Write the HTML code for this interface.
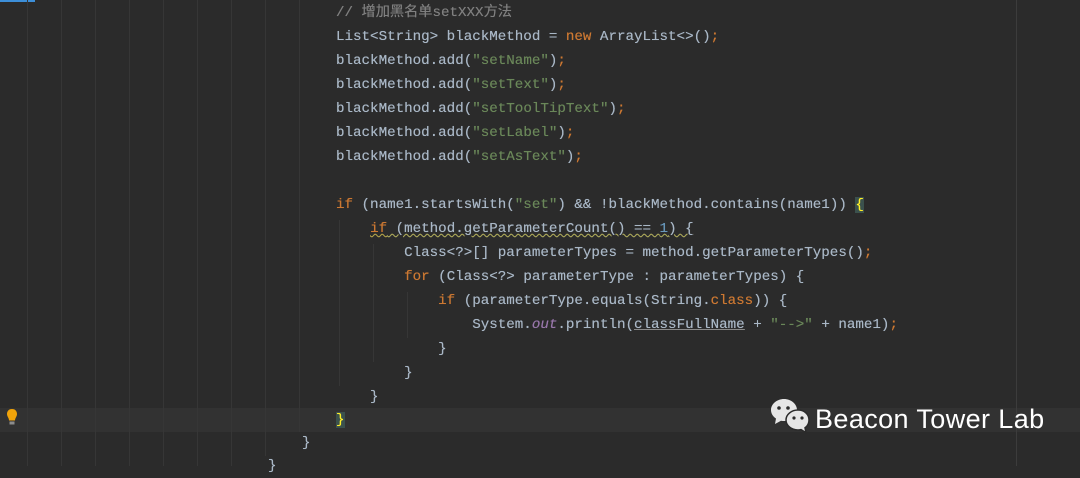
<!DOCTYPE html>
<html><head><meta charset="utf-8"><style>
body{margin:0;width:1080px;height:466px;background:#2b2b2b;overflow:hidden;position:relative;font-family:"Liberation Mono","Noto Sans CJK SC",monospace;}
.g{position:absolute;top:0;height:466px;width:1px;background:#363636}
.l{position:absolute;left:336px;font-size:14.2px;line-height:24px;height:24px;white-space:pre;color:#a9b7c6;text-shadow:0 0 0.4px currentColor}
.k{color:#cc7832}.s{color:#6a8759}.n{color:#6897bb}.c{color:#808080}.i{color:#9876aa;font-style:italic}
.u{text-decoration:underline;text-decoration-color:#8a8a8a}
.w{text-decoration:underline wavy #a8a34a;text-decoration-thickness:1px}
.b{color:#ffef28;background:#3b514d}
</style></head><body>
<div style="position:absolute;left:0;top:0;width:35px;height:2px;background:#3d8fd9"></div>
<div style="position:absolute;left:0;top:408px;width:1080px;height:24px;background:#323232"></div>
<div class="g" style="left:27px"></div><div class="g" style="left:61px"></div><div class="g" style="left:95px"></div><div class="g" style="left:129px"></div><div class="g" style="left:163px"></div><div class="g" style="left:197px"></div><div class="g" style="left:231px"></div><div class="g" style="left:265px;height:456px"></div><div class="g" style="left:299px;height:432px"></div>
<div class="g" style="left:339px;top:220px;height:166px"></div>
<div class="g" style="left:373px;top:244px;height:118px"></div>
<div class="g" style="left:407px;top:292px;height:46px"></div>
<div class="g" style="left:1016px;background:#3c3c3c"></div>
<div class="l c" style="top:1px">// 增加黑名单setXXX方法</div>
<div class="l" style="top:25px">List&lt;String&gt; blackMethod = <span class="k">new</span> ArrayList&lt;&gt;()<span class="k">;</span></div>
<div class="l" style="top:49px">blackMethod.add(<span class="s">"setName"</span>)<span class="k">;</span></div>
<div class="l" style="top:73px">blackMethod.add(<span class="s">"setText"</span>)<span class="k">;</span></div>
<div class="l" style="top:97px">blackMethod.add(<span class="s">"setToolTipText"</span>)<span class="k">;</span></div>
<div class="l" style="top:121px">blackMethod.add(<span class="s">"setLabel"</span>)<span class="k">;</span></div>
<div class="l" style="top:145px">blackMethod.add(<span class="s">"setAsText"</span>)<span class="k">;</span></div>
<div class="l" style="top:193px"><span class="k">if</span> (name1.startsWith(<span class="s">"set"</span>) &amp;&amp; !blackMethod.contains(name1)) <span class="b">{</span></div>
<div class="l" style="top:217px">    <span class="w"><span class="k">if</span> (method.getParameterCount() == <span class="n">1</span>) {</span></div>
<div class="l" style="top:241px">        Class&lt;?&gt;[] parameterTypes = method.getParameterTypes()<span class="k">;</span></div>
<div class="l" style="top:265px">        <span class="k">for</span> (Class&lt;?&gt; parameterType : parameterTypes) {</div>
<div class="l" style="top:289px">            <span class="k">if</span> (parameterType.equals(String.<span class="k">class</span>)) {</div>
<div class="l" style="top:313px">                System.<span class="i">out</span>.println(<span class="u">classFullName</span> + <span class="s">"--&gt;"</span> + name1)<span class="k">;</span></div>
<div class="l" style="top:337px">            }</div>
<div class="l" style="top:361px">        }</div>
<div class="l" style="top:385px">    }</div>
<div class="l" style="top:408px"><span class="b">}</span></div>
<div class="l" style="top:431px;left:302px">}</div>
<div class="l" style="top:454px;left:268px">}</div>
<svg style="position:absolute;left:4px;top:408px" width="16" height="22" viewBox="0 0 16 22"><path d="M8 1C4.5 1 3 3.5 3 6c0 2.5 2 4 2 6.5h6C11 10 13 8.5 13 6c0-2.5-1.5-5-5-5z" fill="#f0a30a"/><rect x="5.5" y="13.5" width="5" height="3" fill="#8c8c8c"/></svg>
<svg style="position:absolute;left:769px;top:397px" width="42" height="40" viewBox="0 0 42 40"><path d="M15 2C8 2 2 7 2 13c0 3.5 2 6.5 5 8.5L6 27l6-3.3c1 .2 2 .3 3 .3 7 0 13-5 13-11S22 2 15 2z" fill="#e6e6e6"/><circle cx="10" cy="11" r="1.8" fill="#2b2b2b"/><circle cx="19" cy="11" r="1.8" fill="#2b2b2b"/><path d="M29 13c-6.5 0-12 4.4-12 10s5.5 10 12 10c1 0 2-.1 3-.4l5 3-1-4.8c2.7-1.9 4-4.7 4-7.8 0-5.6-4.5-10-11-10z" fill="#e6e6e6" stroke="#2b2b2b" stroke-width="1.5"/><circle cx="25" cy="21" r="1.6" fill="#2b2b2b"/><circle cx="33" cy="21" r="1.6" fill="#2b2b2b"/></svg>
<div style="position:absolute;left:815px;top:403px;font-family:'Liberation Sans',sans-serif;font-size:27px;line-height:32px;color:#fff;letter-spacing:0.4px">Beacon Tower Lab</div>
</body></html>
